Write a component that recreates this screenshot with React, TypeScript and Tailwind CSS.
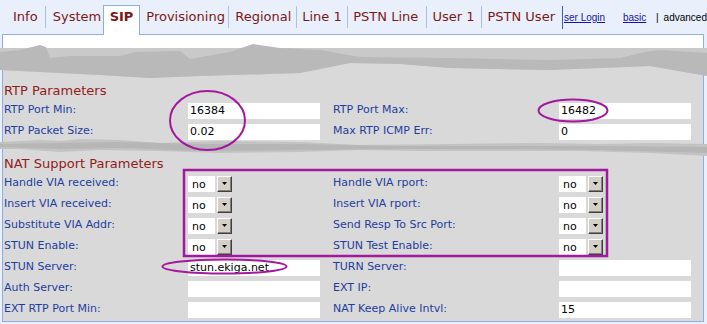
import type { ReactNode } from "react";

const TABS = [
  { label: "Info", ml: "ml-[13px]", w: "w-[25px]" },
  { sep: true, ml: "ml-[7px]" },
  { label: "System", ml: "ml-[7px]", w: "w-[47px]" },
  { label: "SIP", active: true, ml: "ml-[3px]", w: "w-[38px]" },
  { label: "Provisioning", ml: "ml-[6px]", w: "w-[75px]" },
  { sep: true, ml: "ml-[7px]" },
  { label: "Regional", ml: "ml-[6px]", w: "w-[53px]" },
  { sep: true, ml: "ml-[8px]" },
  { label: "Line 1", ml: "ml-[5px]", w: "w-[39px]" },
  { sep: true, ml: "ml-[6px]" },
  { label: "PSTN Line", ml: "ml-[5px]", w: "w-[66px]" },
  { sep: true, ml: "ml-[7px]" },
  { label: "User 1", ml: "ml-[6px]", w: "w-[42px]" },
  { sep: true, ml: "ml-[7px]" },
  { label: "PSTN User", ml: "ml-[5px]", w: "w-[68px]" },
];

function TextBox({ value = "" }: { value?: string }) {
  return (
    <div className="h-[16px] w-[132px] bg-white pl-[2px] text-[11px] leading-[16px] text-black">
      {value}
    </div>
  );
}

function SelectBox() {
  return (
    <div className="flex items-center gap-[2px]">
      <div className="h-[16px] w-[27px] bg-white pl-[4px] text-[11px] leading-[17px] text-black">no</div>
      <div className="flex h-[16px] w-[15px] items-center justify-center border border-t-white border-l-white border-r-[#404040] border-b-[#404040] bg-[#d4d0c8] shadow-[inset_-1px_-1px_0_#808080]">
        <svg width="5" height="3" viewBox="0 0 5 3">
          <path d="M0 0h5L2.5 3z" fill="#000" />
        </svg>
      </div>
    </div>
  );
}

function Row({ l, lc, r, rc }: { l: string; lc: ReactNode; r: string; rc: ReactNode }) {
  return (
    <div className="flex h-[21px] items-center text-[11px] text-[#1f3d9e]">
      <div className="w-[185px] pl-[1px]">{l}</div>
      <div className="w-[145px]">{lc}</div>
      <div className="w-[226px]">{r}</div>
      <div>{rc}</div>
    </div>
  );
}

function Smudges() {
  return (
    <svg className="pointer-events-none absolute left-0 top-0 z-20" width="707" height="324" viewBox="0 0 707 324">
      {/* top redaction */}
      <path
        d="M0 48 H707 V76 L650 66 L600 68 L550 70 L450 68 L400 64 L350 63 L300 73 L200 76 L150 78 L100 75 L60 73 L0 70 Z"
        fill="#c9c9c9"
      />
      <path
        d="M0 52 L20 50 L40 45 L46 47 L50 58 L70 56 L120 56 L135 52 L180 51 L190 59 L230 52 L253 44 L280 48 L320 50 L360 57 L450 58 L550 60 L620 58 L645 52 L660 50 L707 53 V76 L650 66 L600 68 L550 70 L450 68 L400 64 L350 63 L300 73 L200 76 L150 78 L100 75 L60 73 L0 70 Z"
        fill="#b9b9b9"
      />
      {/* middle redaction */}
      <path
        d="M0 142 L40 140 L60 141 L80 139 L120 140 L160 143 L220 141 L300 142 L360 145 L450 144 L540 143 L600 144 L650 143 L707 144 V156 L650 153 L580 151 L500 151 L420 151 L360 150 L300 152 L220 153 L160 151 L100 150 L60 152 L20 149 L0 149 Z"
        fill="#c3c3c3"
      />
      <path
        d="M0 144 L60 143 L120 142 L200 144 L300 144 L400 146 L500 146 L600 146 L707 147 V153 L600 150 L500 149 L400 149 L300 150 L200 151 L120 148 L60 149 L0 147 Z"
        fill="#b6b6b6"
      />
      {/* annotations */}
      <g fill="none" stroke="#a3189e">
        <ellipse cx="207.5" cy="120.5" rx="37.5" ry="29.5" strokeWidth="2" />
        <ellipse cx="573" cy="110.5" rx="34.5" ry="11" strokeWidth="2" />
        <rect x="184" y="170" width="423" height="86" strokeWidth="2.5" />
        <ellipse cx="224.5" cy="266.5" rx="62" ry="7" strokeWidth="2" />
      </g>
    </svg>
  );
}

export default function App() {
  return (
    <div className="relative h-[324px] w-[707px] overflow-hidden bg-[#e9f0fb] font-['DejaVu_Sans',sans-serif]">
      {/* Tab bar */}
      <div className="flex h-[34px] items-center whitespace-nowrap text-[13px] text-[#7d1717]">
        {TABS.map((t, i) =>
          t.sep ? (
            <div key={i} className={`${t.ml} h-[22px] w-px bg-[#a8c0e6]`} />
          ) : t.active ? (
            <div
              key={i}
              className={`${t.ml} ${t.w} relative top-[1px] z-10 flex h-[30px] self-end justify-center border border-b-0 border-[#8caee0] bg-white pt-[2px] font-bold leading-[18px]`}
            >
              {t.label}
            </div>
          ) : (
            <div key={i} className={`${t.ml} ${t.w}`}>
              {t.label}
            </div>
          )
        )}
        <div className="ml-[7px] h-[23px] w-px bg-[#3a5cc0]" />
        <a className="ml-[1px] w-[39px] font-['Liberation_Sans',sans-serif] text-[10px] text-[#1515a8] underline">
          ser Login
        </a>
        <a className="ml-[20px] w-[22px] font-['Liberation_Sans',sans-serif] text-[10px] text-[#1515a8] underline">
          basic
        </a>
        <span className="ml-[11px] font-['Liberation_Sans',sans-serif] text-[10px] text-black">|</span>
        <span className="ml-[5px] font-['Liberation_Sans',sans-serif] text-[10px] text-black">advanced</span>
      </div>

      {/* Panel */}
      <div className="ml-[2px] h-[288px] w-[702px] border border-[#8caee0]">
        <div className="h-[13px] bg-white" />
        <div className="h-[273px] bg-[#d9d9d9]">
          <div className="h-[33px]" />
          <div className="h-[19px] pl-[1px] text-[13px] leading-[19px] text-[#931c1c]">RTP Parameters</div>
          <Row l="RTP Port Min:" lc={<TextBox value="16384" />} r="RTP Port Max:" rc={<TextBox value="16482" />} />
          <Row l="RTP Packet Size:" lc={<TextBox value="0.02" />} r="Max RTP ICMP Err:" rc={<TextBox value="0" />} />
          <div className="h-[13px]" />
          <div className="h-[18px] pl-[1px] text-[13px] leading-[18px] text-[#931c1c]">NAT Support Parameters</div>
          <Row l="Handle VIA received:" lc={<SelectBox />} r="Handle VIA rport:" rc={<SelectBox />} />
          <Row l="Insert VIA received:" lc={<SelectBox />} r="Insert VIA rport:" rc={<SelectBox />} />
          <Row l="Substitute VIA Addr:" lc={<SelectBox />} r="Send Resp To Src Port:" rc={<SelectBox />} />
          <Row l="STUN Enable:" lc={<SelectBox />} r="STUN Test Enable:" rc={<SelectBox />} />
          <Row l="STUN Server:" lc={<TextBox value="stun.ekiga.net" />} r="TURN Server:" rc={<TextBox />} />
          <Row l="Auth Server:" lc={<TextBox />} r="EXT IP:" rc={<TextBox />} />
          <Row l="EXT RTP Port Min:" lc={<TextBox />} r="NAT Keep Alive Intvl:" rc={<TextBox value="15" />} />
        </div>
      </div>

      <Smudges />
    </div>
  );
}
